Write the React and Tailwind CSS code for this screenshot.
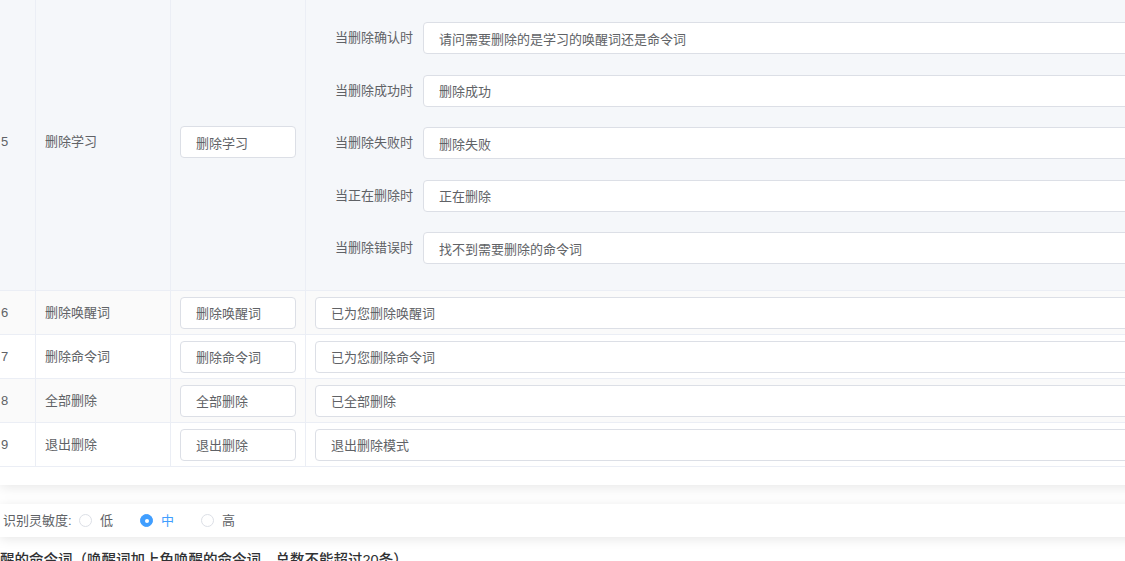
import React from 'react';

const FONT = { fontFamily: '"Liberation Sans", "Noto Sans CJK SC", sans-serif' };

const subItems = [
  { label: '当删除确认时', value: '请问需要删除的是学习的唤醒词还是命令词' },
  { label: '当删除成功时', value: '删除成功' },
  { label: '当删除失败时', value: '删除失败' },
  { label: '当正在删除时', value: '正在删除' },
  { label: '当删除错误时', value: '找不到需要删除的命令词' },
];

const rows = [
  { no: 6, name: '删除唤醒词', cmd: '删除唤醒词', reply: '已为您删除唤醒词', striped: true },
  { no: 7, name: '删除命令词', cmd: '删除命令词', reply: '已为您删除命令词' },
  { no: 8, name: '全部删除', cmd: '全部删除', reply: '已全部删除', striped: true },
  { no: 9, name: '退出删除', cmd: '退出删除', reply: '退出删除模式' },
];

// 只读输入框，Element 风格
const TextBox = ({ value, className = '' }) => (
  <input
    readOnly
    value={value}
    className={
      'h-[32px] box-border border border-[#dcdfe6] rounded-[4px] bg-white px-[15px] text-[13px] text-[#606266] outline-none ' +
      className
    }
  />
);

const Radio = ({ label, checked }) => (
  <div className="flex items-center w-[61px] shrink-0">
    {checked ? (
      <span className="w-[13px] h-[13px] rounded-full bg-[#409eff] border border-[#409eff] flex items-center justify-center">
        <span className="w-[4px] h-[4px] rounded-full bg-white" />
      </span>
    ) : (
      <span className="w-[13px] h-[13px] rounded-full bg-white border border-[#dcdfe6]" />
    )}
    <span className={'ml-[8px] text-[13px] ' + (checked ? 'text-[#409eff]' : 'text-[#606266]')}>{label}</span>
  </div>
);

export default function App() {
  return (
    <div className="w-[1125px] h-[561px] overflow-hidden bg-white" style={FONT}>
      <div className="w-[1400px] mt-[-6px]">
        {/* 表格卡片 */}
        <div className="bg-white shadow-[0_2px_12px_0_rgba(0,0,0,0.1)] pb-[18px]">
          {/* 第5行：删除学习 */}
          <div className="flex bg-[#f5f7fa] border-b border-[#ebeef5] text-[13px] text-[#606266]">
            <div className="w-[36px] shrink-0 border-r border-[#ebeef5] flex items-center pl-[1px]">5</div>
            <div className="w-[135px] shrink-0 border-r border-[#ebeef5] flex items-center pl-[9px]">删除学习</div>
            <div className="w-[135px] shrink-0 border-r border-[#ebeef5] flex items-center pl-[9px]">
              <TextBox value="删除学习" className="w-[116px]" />
            </div>
            <div className="flex-1 flex flex-col gap-[20.5px] pt-[28px] pb-[26px]">
              {subItems.map((s) => (
                <div key={s.label} className="flex items-center h-[32px]">
                  <span className="w-[117px] shrink-0 pr-[10px] text-right">{s.label}</span>
                  <TextBox value={s.value} className="flex-1" />
                </div>
              ))}
            </div>
          </div>

          {rows.map((r) => (
            <div
              key={r.no}
              className={
                'flex h-[44px] border-b border-[#ebeef5] text-[13px] text-[#606266] ' +
                (r.striped ? 'bg-[#fafafa]' : 'bg-white')
              }
            >
              <div className="w-[36px] shrink-0 border-r border-[#ebeef5] flex items-center pl-[1px]">{r.no}</div>
              <div className="w-[135px] shrink-0 border-r border-[#ebeef5] flex items-center pl-[9px]">{r.name}</div>
              <div className="w-[135px] shrink-0 border-r border-[#ebeef5] flex items-center pl-[9px]">
                <TextBox value={r.cmd} className="w-[116px]" />
              </div>
              <div className="flex-1 flex items-center pl-[9px]">
                <TextBox value={r.reply} className="flex-1" />
              </div>
            </div>
          ))}
        </div>

        {/* 识别灵敏度 */}
        <div className="mt-[19px] h-[33px] bg-white shadow-[0_2px_12px_0_rgba(0,0,0,0.1)] flex items-center text-[13px] text-[#606266]">
          <span className="w-[79px] shrink-0 pl-[3px]">识别灵敏度:</span>
          <Radio label="低" />
          <Radio label="中" checked />
          <Radio label="高" />
        </div>

        <div className="mt-[13px] text-[14.5px] leading-[20px] font-medium text-[#303133]">
          醒的命令词（唤醒词加上免唤醒的命令词，总数不能超过20条）
        </div>
      </div>
    </div>
  );
}
